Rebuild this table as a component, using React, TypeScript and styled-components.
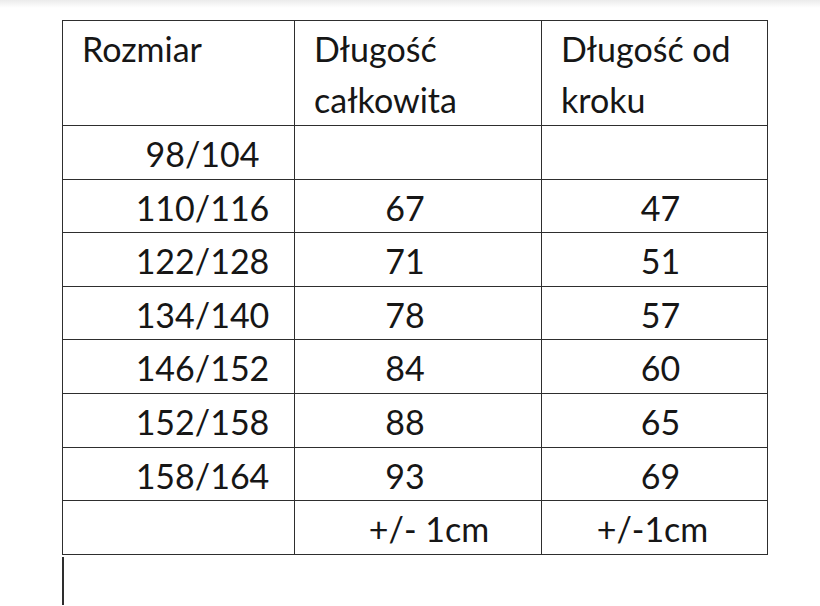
import styled, { createGlobalStyle } from "styled-components";

const GlobalStyle = createGlobalStyle`
  html, body {
    margin: 0;
    padding: 0;
    background: #ffffff;
  }
  body {
    font-family: Lato, "Open Sans", sans-serif;
    color: #161616;
  }
`;

const header = ["Rozmiar", "Długość całkowita", "Długość od kroku"];

const rows = [
  ["98/104", "", ""],
  ["110/116", "67", "47"],
  ["122/128", "71", "51"],
  ["134/140", "78", "57"],
  ["146/152", "84", "60"],
  ["152/158", "88", "65"],
  ["158/164", "93", "69"],
];

const footer = ["", "+/- 1cm", "+/-1cm"];

// text offset from the centre of each column, as in the source document
const rowShift = [48, -26, 12];
const footerShift = [0, 22, -4];

export default function App() {
  return (
    <>
      <GlobalStyle />
      <TopShade />
      <Page>
        <SizeTable>
          <colgroup>
            <Col $width={232} />
            <Col $width={247} />
            <Col $width={226} />
          </colgroup>
          <thead>
            <tr>
              {header.map((label) => (
                <HeadCell key={label}>{label}</HeadCell>
              ))}
            </tr>
          </thead>
          <tbody>
            {rows.map((row) => (
              <tr key={row[0]}>
                {row.map((value, i) => (
                  <Cell key={i} $shift={rowShift[i]}>
                    {value}
                  </Cell>
                ))}
              </tr>
            ))}
            <tr>
              {footer.map((value, i) => (
                <Cell key={i} $shift={footerShift[i]}>
                  {value}
                </Cell>
              ))}
            </tr>
          </tbody>
        </SizeTable>
        <Caret />
      </Page>
    </>
  );
}

const TopShade = styled.div`
  height: 8px;
  background: linear-gradient(#ebebeb, #ffffff);
`;

const Page = styled.div`
  padding: 12px 0 0 62px;
`;

const SizeTable = styled.table`
  width: 705px;
  border-collapse: collapse;
  table-layout: fixed;
  font-size: 34px;
`;

const Col = styled.col<{ $width: number }>`
  width: ${(p) => p.$width}px;
`;

const HeadCell = styled.th`
  border: 1.5px solid #2e2e2e;
  padding: 2px 8px 0 19px;
  line-height: 51px;
  text-align: left;
  vertical-align: top;
  font-weight: 400;
`;

const Cell = styled.td<{ $shift: number }>`
  border: 1.5px solid #2e2e2e;
  padding: 4px ${(p) => Math.max(-p.$shift, 0)}px 0
    ${(p) => Math.max(p.$shift, 0)}px;
  line-height: 48.6px;
  text-align: center;
  vertical-align: top;
  white-space: nowrap;
`;

const Caret = styled.div`
  width: 1.5px;
  height: 48px;
  margin-top: 2px;
  background: #2e2e2e;
`;
